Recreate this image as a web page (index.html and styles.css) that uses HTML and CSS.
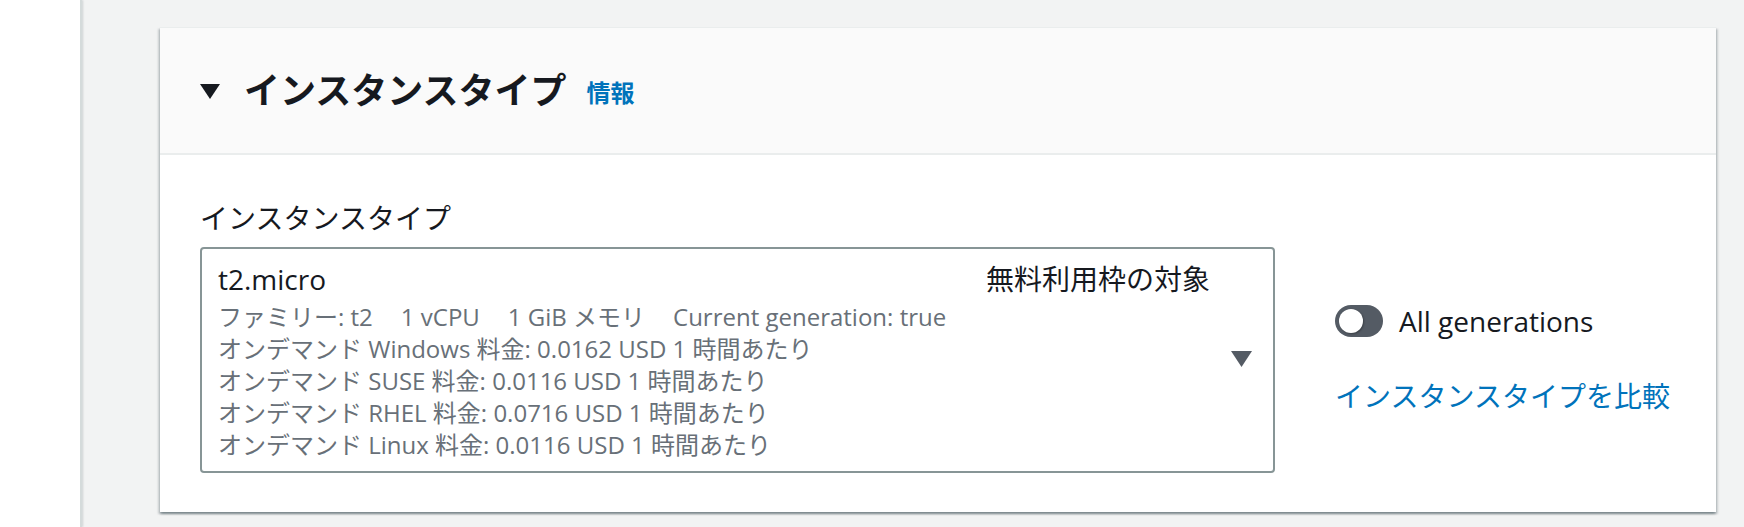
FILE: index.html
```html
<!DOCTYPE html>
<html lang="ja">
<head>
<meta charset="utf-8">
<title>インスタンスタイプ</title>
<link rel="stylesheet" href="styles.css">
</head>
<body>
<div class="layout">
  <aside class="sidebar"></aside>
  <main class="main">
    <section class="card">
      <header class="card-header">
        <svg class="caret" width="20" height="15" viewBox="0 0 20 15" aria-hidden="true"><polygon points="0,0 20,0 10,15" fill="#16191f"/></svg>
        <h2 class="title">インスタンスタイプ</h2>
        <a class="info" href="#">情報</a>
      </header>
      <div class="card-body">
        <div class="field">
          <div class="label">インスタンスタイプ</div>
          <div class="field-row">
            <div class="select">
              <div class="select-content">
                <div class="select-top">
                  <span class="name">t2.micro</span>
                  <span class="tag">無料利用枠の対象</span>
                </div>
                <div class="tags">
                  <span>ファミリー: t2</span>
                  <span>1 vCPU</span>
                  <span>1 GiB メモリ</span>
                  <span>Current generation: true</span>
                </div>
                <div class="desc">オンデマンド Windows 料金: 0.0162 USD 1 時間あたり</div>
                <div class="desc">オンデマンド SUSE 料金: 0.0116 USD 1 時間あたり</div>
                <div class="desc">オンデマンド RHEL 料金: 0.0716 USD 1 時間あたり</div>
                <div class="desc">オンデマンド Linux 料金: 0.0116 USD 1 時間あたり</div>
              </div>
              <svg class="dropdown" width="21" height="16" viewBox="0 0 21 16" aria-hidden="true"><polygon points="0,0 21,0 10.5,16" fill="#545b64"/></svg>
            </div>
            <div class="side">
              <label class="toggle-row">
                <span class="toggle"><span class="knob"></span></span>
                <span class="toggle-label">All generations</span>
              </label>
              <a class="compare" href="#">インスタンスタイプを比較</a>
            </div>
          </div>
        </div>
      </div>
    </section>
  </main>
</div>
</body>
</html>
```

FILE: styles.css
```css
html, body {
  margin: 0;
  padding: 0;
  height: 100%;
}
body {
  font-family: "Open Sans", "Noto Sans CJK JP", sans-serif;
  color: #16191f;
  background: #f2f3f3;
  overflow: hidden;
}
.layout {
  display: flex;
  height: 527px;
}
.sidebar {
  width: 80px;
  flex: none;
  background: #ffffff;
  border-right: 2px solid #d5dbdb;
  box-shadow: 1px 0 2px rgba(0, 28, 36, 0.15);
}
.main {
  flex: 1;
  padding: 27px 28px 0 78px;
}
.card {
  background: #ffffff;
  border-top: 1px solid #eaeded;
  box-shadow: 0 2px 2px 0 rgba(0, 28, 36, 0.3), 2px 2px 2px 0 rgba(0, 28, 36, 0.15), -2px 2px 2px 0 rgba(0, 28, 36, 0.15);
  height: 485px;
  box-sizing: border-box;
}
.card-header {
  display: flex;
  align-items: center;
  background: #fafafa;
  border-bottom: 2px solid #eaeded;
  height: 127px;
  box-sizing: border-box;
  padding: 0 40px;
}
.caret {
  flex: none;
  margin-right: 24px;
  margin-top: 2px;
}
.title {
  margin: 0;
  font-size: 36px;
  line-height: 44px;
  font-weight: 700;
  color: #16191f;
}
.info {
  margin-left: 20px;
  font-size: 24px;
  line-height: 44px;
  font-weight: 700;
  color: #0073bb;
  text-decoration: none;
  margin-top: 4px;
}
.card-body {
  padding: 41px 40px 0 40px;
}
.label {
  font-size: 28px;
  line-height: 44px;
  margin-bottom: 7px;
}
.field-row {
  display: flex;
  align-items: flex-start;
}
.select {
  width: 1075px;
  box-sizing: border-box;
  border: 2px solid #879596;
  border-radius: 4px;
  padding: 8px 21px 10px 16px;
  display: flex;
  align-items: center;
}
.select-content {
  flex: 1;
}
.select-top {
  display: flex;
  justify-content: space-between;
  font-size: 28px;
  line-height: 44px;
}
.tag {
  color: #16191f;
}
.tags {
  display: flex;
  gap: 28px;
  font-size: 24px;
  line-height: 32px;
  color: #687078;
}
.desc {
  font-size: 24px;
  line-height: 32px;
  color: #687078;
}
.dropdown {
  flex: none;
  margin-left: 21px;
}
.side {
  margin-left: 60px;
  padding-top: 52px;
  display: flex;
  flex-direction: column;
}
.toggle-row {
  display: flex;
  align-items: center;
  height: 44px;
}
.toggle {
  position: relative;
  width: 48px;
  height: 32px;
  border-radius: 16px;
  background: #545b64;
  flex: none;
}
.knob {
  position: absolute;
  left: 4px;
  top: 4px;
  width: 24px;
  height: 24px;
  border-radius: 50%;
  background: #ffffff;
  box-shadow: 1px 1px 2px rgba(0, 0, 0, 0.3);
}
.toggle-label {
  margin-left: 16px;
  font-size: 28px;
  line-height: 44px;
  color: #16191f;
}
.compare {
  margin-top: 31px;
  font-size: 28px;
  line-height: 44px;
  color: #0073bb;
  text-decoration: none;
}
```
